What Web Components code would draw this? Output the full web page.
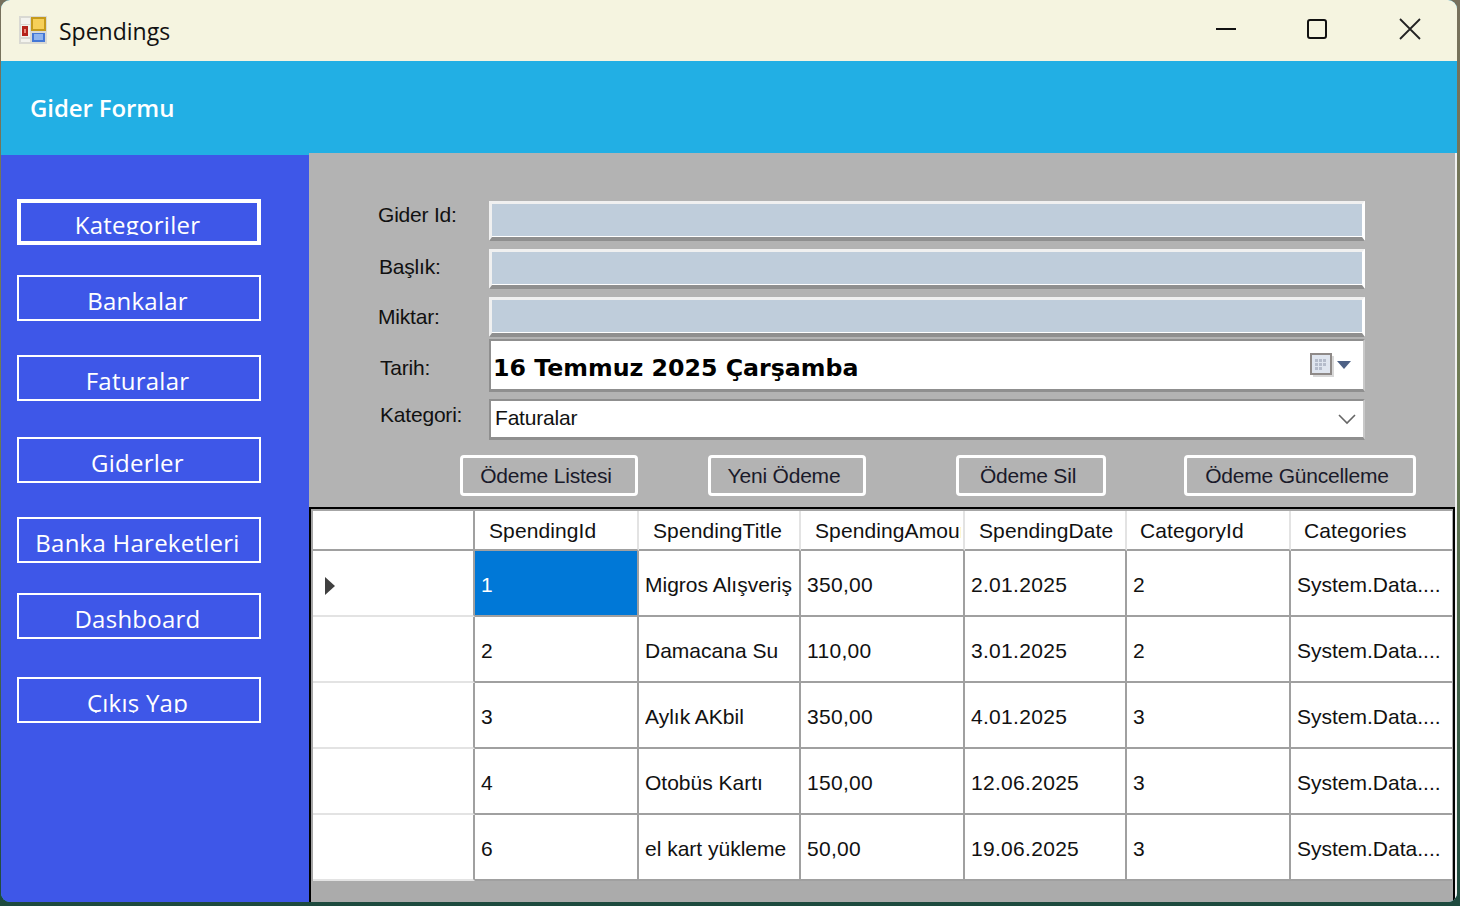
<!DOCTYPE html>
<html lang="tr">
<head>
<meta charset="utf-8">
<title>Spendings</title>
<style>
  html, body { margin: 0; height: 100%; overflow: hidden; }
  body { background: linear-gradient(180deg, #77705c 0, #6f7d55 45%, #1d4a3e 100%); }
</style>
</head>
<body>
<app-window>
  <title-bar slot="title" caption="Spendings"></title-bar>
  <form-banner slot="banner">Gider Formu</form-banner>
  <nav-panel slot="nav">
    <nav-button thick>Kategoriler</nav-button>
    <nav-button gap="30">Bankalar</nav-button>
    <nav-button gap="34">Faturalar</nav-button>
    <nav-button gap="36">Giderler</nav-button>
    <nav-button gap="34">Banka Hareketleri</nav-button>
    <nav-button gap="30">Dashboard</nav-button>
    <nav-button gap="38">Çıkış Yap</nav-button>
  </nav-panel>
  <spending-form slot="form"></spending-form>
  <data-grid slot="grid"></data-grid>
</app-window>

<script>
const SEGOE = '"Open Sans", "Noto Sans", sans-serif'
const MS_SANS = '"Liberation Sans", Arial, sans-serif'

const COLUMNS = ['SpendingId', 'SpendingTitle', 'SpendingAmount', 'SpendingDate', 'CategoryId', 'Categories']
const NUMERIC = [0, 2, 3, 4]
const ROWS = [
  ['1', 'Migros Alışveriş', '350,00', '2.01.2025', '2', 'System.Data....'],
  ['2', 'Damacana Su', '110,00', '3.01.2025', '2', 'System.Data....'],
  ['3', 'Aylık AKbil', '350,00', '4.01.2025', '3', 'System.Data....'],
  ['4', 'Otobüs Kartı', '150,00', '12.06.2025', '3', 'System.Data....'],
  ['6', 'el kart yükleme', '50,00', '19.06.2025', '3', 'System.Data....']
]

/**
 * Base class, attaches the shadow root with the given markup.
 */
class ShadowElement extends HTMLElement {
  /**
   * Fills the shadow root.
   *
   * @param {string} html - The markup and styles.
   */
  render (html) {
    if (!this.shadowRoot) this.attachShadow({ mode: 'open' })
    this.shadowRoot.innerHTML = html
  }
}

customElements.define('app-window', class extends ShadowElement {
  connectedCallback () {
    this.render(`
      <style>
        :host {
          display: grid;
          grid-template-columns: 308px 1fr;
          grid-template-rows: 61px 92px 1fr;
          width: 1456px;
          height: 902px;
          margin-left: 1px;
          border-radius: 9px;
          overflow: hidden;
          background: #22afe4;
        }
        .top { grid-column: 1 / 3; }
        .side { padding-top: 2px; }
        main {
          display: flex;
          flex-direction: column;
          background: #b3b3b3;
          border-right: 2px solid #f0f0f0;
          min-width: 0;
        }
      </style>
      <div class="top"><slot name="title"></slot></div>
      <div class="top"><slot name="banner"></slot></div>
      <div class="side"><slot name="nav"></slot></div>
      <main>
        <slot name="form"></slot>
        <slot name="grid"></slot>
      </main>
    `)
  }
})

customElements.define('title-bar', class extends ShadowElement {
  connectedCallback () {
    this.render(`
      <style>
        :host {
          display: flex;
          align-items: center;
          height: 61px;
          padding-left: 17px;
          background: #f5f4e0;
          font: 23px ${SEGOE};
          color: #111;
        }
        .icon { width: 30px; height: 30px; margin-right: 11px; margin-top: -1px; }
        .caption { flex: 1; margin-top: 1px; }
        .controls { display: flex; align-items: center; padding-right: 35px; margin-top: -3px; }
        .controls svg { display: block; width: 24px; height: 24px; }
        .controls .max { margin: 0 69px 0 67px; }
      </style>
      <svg class="icon" viewBox="0 0 30 30">
        <rect x="1" y="1" width="28" height="28" fill="#d9d9d3"/>
        <rect x="3" y="3" width="9" height="6" fill="#f3f3ee"/>
        <rect x="3" y="10" width="9" height="12" fill="#f3f3ee"/>
        <rect x="4" y="11" width="6" height="10" fill="#b5231c"/>
        <rect x="6" y="14" width="2" height="4" fill="#e9877b"/>
        <rect x="13" y="2" width="15" height="14" fill="#c59a1c"/>
        <rect x="15" y="4" width="11" height="10" fill="#f6cf59"/>
        <rect x="14" y="18" width="13" height="9" fill="#4377d6"/>
        <rect x="16" y="19" width="9" height="6" fill="#8fb4ee"/>
        <rect x="3" y="24" width="9" height="3" fill="#f3f3ee"/>
      </svg>
      <span class="caption">${this.getAttribute('caption')}</span>
      <div class="controls">
        <svg viewBox="0 0 24 24"><path d="M2 12h20" stroke="#111" stroke-width="2" fill="none"/></svg>
        <svg class="max" viewBox="0 0 24 24"><rect x="3" y="3" width="18" height="18" rx="2" stroke="#111" stroke-width="2" fill="none"/></svg>
        <svg viewBox="0 0 24 24"><path d="M2 2l20 20M22 2L2 22" stroke="#222" stroke-width="1.8" fill="none"/></svg>
      </div>
    `)
  }
})

customElements.define('form-banner', class extends ShadowElement {
  connectedCallback () {
    this.render(`
      <style>
        :host {
          display: flex;
          align-items: center;
          height: 92px;
          padding-left: 29px;
          box-sizing: border-box;
          background: #22afe4;
          color: #fff;
          font: 600 24px ${SEGOE};
          letter-spacing: -0.1px;
        }
      </style>
      <slot></slot>
    `)
  }
})

customElements.define('nav-panel', class extends ShadowElement {
  connectedCallback () {
    this.render(`
      <style>
        :host {
          display: flex;
          flex-direction: column;
          align-items: flex-start;
          box-sizing: border-box;
          height: 747px;
          padding: 44px 0 0 16px;
          background: #3e57e8;
        }
      </style>
      <slot></slot>
    `)
  }
})

customElements.define('nav-button', class extends ShadowElement {
  connectedCallback () {
    const border = this.hasAttribute('thick') ? 4 : 2
    const gap = this.getAttribute('gap') || 0
    this.render(`
      <style>
        :host {
          display: block;
          box-sizing: border-box;
          width: 244px;
          height: 46px;
          margin-top: ${gap}px;
          border: ${border}px solid #fff;
          color: #fff;
          font: 24px ${SEGOE};
          letter-spacing: 0.25px;
          text-align: center;
        }
        /* The text is cut at its baseline, as in the form. */
        .clip { display: block; height: ${36 - border}px; padding-right: 3px; overflow: hidden; line-height: ${48 - 2 * (border - 2)}px; }
      </style>
      <span class="clip"><slot></slot></span>
    `)
  }
})

customElements.define('spending-form', class extends ShadowElement {
  connectedCallback () {
    this.render(`
      <style>
        :host {
          display: block;
          box-sizing: border-box;
          height: 354px;
          padding: 48px 0 0 69px;
          font: 21px ${MS_SANS};
          letter-spacing: -0.2px;
          color: #111;
        }
        .fields {
          display: grid;
          grid-template-columns: 111px 876px;
          grid-template-rows: 48px 48px 42px 60px 41px;
          align-items: center;
        }
        .fields label { white-space: nowrap; }
        .fields > div { align-self: start; }
        .l1 { padding-bottom: 20px; }
        .l2 { padding-bottom: 12px; padding-left: 1px; }
        .l3 { padding-bottom: 2px; }
        .l4 { padding-bottom: 2px; padding-left: 2px; }
        .l5 { padding-bottom: 9px; padding-left: 2px; }
        .input {
          box-sizing: border-box;
          height: 40px;
          background: #bfcddb;
          border: 3px solid #fff;
          border-top-color: #f0f0f0;
          border-left-color: #f0f0f0;
          border-bottom: 4px solid #8f8f8f;
          box-shadow: inset 0 -1px 0 #fff;
        }
        .date, .combo {
          display: flex;
          align-items: center;
          box-sizing: border-box;
          background: #fff;
          border: 2px solid #8f8f8f;
          border-right-color: #c8c8c8;
          border-bottom-width: 3px;
        }
        .date { height: 53px; padding-left: 2px; color: #000; font: bold 23.7px "DejaVu Sans", Verdana, sans-serif; letter-spacing: 0; }
        .date .grow { padding-top: 5px; }
        .combo { height: 41px; padding-left: 4px; }
        .combo .grow { padding-bottom: 2px; }
        .grow { flex: 1; white-space: nowrap; }
        .cal { width: 44px; height: 30px; margin-right: 9px; margin-top: 2px; }
        .chev { width: 20px; height: 12px; margin-right: 6px; }
        .actions { display: flex; align-items: flex-start; padding-left: 82px; margin-top: 15px; }
        .actions button {
          box-sizing: border-box;
          height: 41px;
          padding: 0 6px 0 0;
          background: #b3b3b3;
          border: 3px solid #fff;
          border-radius: 4px;
          font: inherit;
          letter-spacing: inherit;
          color: #1a1a2a;
        }
      </style>
      <div class="fields">
        <label class="l1">Gider Id:</label><div class="input"></div>
        <label class="l2">Başlık:</label><div class="input"></div>
        <label class="l3">Miktar:</label><div class="input"></div>
        <label class="l4">Tarih:</label>
        <div class="date">
          <span class="grow">16 Temmuz 2025 Çarşamba</span>
          <svg class="cal" viewBox="0 0 44 30">
            <rect x="0" y="2" width="22" height="22" fill="#8f8a88"/>
            <rect x="2" y="4" width="18" height="18" fill="#dfe5ef"/>
            <rect x="22" y="5" width="2" height="21" fill="#d8d8d8"/>
            <rect x="3" y="24" width="21" height="2" fill="#d8d8d8"/>
            <path d="M5 8h3v3H5zM9 8h3v3H9zM13 8h3v3h-3zM5 12h3v3H5zM9 12h3v3H9zM13 12h3v3h-3zM5 16h3v3H5zM9 16h3v3H9z" fill="#b5bccb"/>
            <path d="M27 10h14l-7 8z" fill="#4d6185"/>
          </svg>
        </div>
        <label class="l5">Kategori:</label>
        <div class="combo">
          <span class="grow">Faturalar</span>
          <svg class="chev" viewBox="0 0 20 12"><path d="M2 2l8 8 8-8" fill="none" stroke="#666" stroke-width="1.6"/></svg>
        </div>
      </div>
      <div class="actions">
        <button style="width:178px">Ödeme Listesi</button>
        <button style="width:158px;margin-left:70px">Yeni Ödeme</button>
        <button style="width:150px;margin-left:90px">Ödeme Sil</button>
        <button style="width:232px;margin-left:78px">Ödeme Güncelleme</button>
      </div>
    `)
  }
})

customElements.define('data-grid', class extends ShadowElement {
  connectedCallback () {
    const head = COLUMNS.map(name => `<div class="cell head"><span>${name}</span></div>`).join('')
    const body = ROWS.map((row, r) => {
      const marker = r === 0 ? '<svg class="marker" viewBox="0 0 10 18"><path d="M0 0l10 9-10 9z" fill="#404040"/></svg>' : ''
      const cells = row.map((value, c) => {
        const classes = [NUMERIC.includes(c) ? 'num' : '', r === 0 && c === 0 ? 'sel' : ''].join(' ')
        return `<div class="cell ${classes}"><span>${value}</span></div>`
      }).join('')
      return `<div class="cell rowhead">${marker}</div>${cells}`
    }).join('')
    this.render(`
      <style>
        :host {
          display: block;
          box-sizing: border-box;
          height: 395px;
          background: #ababab;
          border: 2px solid #000;
          border-bottom: 0;
          font: 21px ${MS_SANS};
          color: #111;
        }
        .grid {
          display: grid;
          grid-template-columns: 162px 164px 162px 164px 162px 164px 161px;
          grid-template-rows: 40px repeat(5, 66px);
          padding: 2px 0 0 2px;
          width: max-content;
          background:
            linear-gradient(#a6a6a6, #a6a6a6) left top / 100% 2px no-repeat,
            linear-gradient(#a6a6a6, #a6a6a6) left top / 2px 100% no-repeat;
        }
        .cell {
          display: flex;
          align-items: center;
          box-sizing: border-box;
          padding-left: 6px;
          padding-top: 4px;
          overflow: hidden;
          white-space: nowrap;
          background: #fff;
          border-right: 2px solid #a0a0a0;
          border-bottom: 2px solid #a0a0a0;
        }
        .cell span { min-width: 0; overflow: hidden; }
        .num { letter-spacing: 0.3px; }
        .head { padding-left: 14px; padding-right: 2px; padding-top: 2px; letter-spacing: 0.1px; border-right-color: #e3e3e3; }
        .head:nth-child(6), .head:nth-child(7) { padding-left: 13px; }
        .corner, .rowhead { border-right-color: #a0a0a0; }
        .rowhead { border-bottom-color: #e3e3e3; padding-left: 12px; padding-top: 6px; }
        .sel { background: #0078d7; color: #fff; }
        .marker { width: 10px; height: 18px; }
        .cell:nth-child(7n) { border-right: 0; }
      </style>
      <div class="grid">
        <div class="cell head corner"></div>${head}
        ${body}
      </div>
    `)
  }
})
</script>
</body>
</html>
